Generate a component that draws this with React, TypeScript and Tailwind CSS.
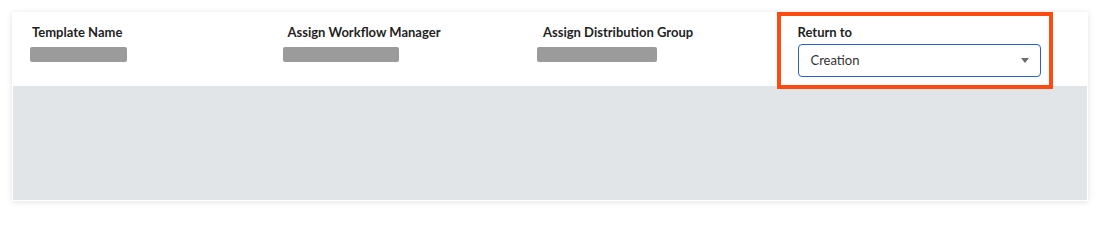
const columns = [
  { label: 'Template Name', bar: 'w-[97px] ml-0' },
  { label: 'Assign Workflow Manager', bar: 'w-[116px] ml-[-3px]' },
  { label: 'Assign Distribution Group', bar: 'w-[120px] ml-[-4px]' },
];

export default function App() {
  return (
    <div className="w-[1100px] h-[214px] overflow-hidden bg-white font-['Lato',_'Liberation_Sans',_sans-serif] pt-3 pl-3">
      <div className="w-[1076px] h-[189px] bg-white flex flex-col shadow-[0_1px_6px_rgba(0,0,0,0.12)]">
        {/* Header row */}
        <div className="h-[74px] flex pl-[18px]">
          {columns.map((col) => (
            <div key={col.label} className="w-[255.5px] pt-[12px]">
              <p className="text-[13px] font-bold leading-[16px] text-[#1f1f1f] pl-[2px]">{col.label}</p>
              <div className={`${col.bar} h-[15px] mt-[7px] rounded-[2px] bg-[#9b9b9b]`} />
            </div>
          ))}

          {/* Highlighted "Return to" field */}
          <div className="relative z-10 ml-[-20px] w-[276px] h-[77px] border-4 border-[#ff4a12] bg-white pl-[17px] pt-[8px]">
            <p className="text-[13px] font-bold leading-[16px] text-[#1f1f1f]">Return to</p>
            <div className="mt-[4px] w-[243px] h-[33px] rounded-[4px] border-[1.5px] border-[#2b5fcf] flex items-center justify-between pl-[12px] pr-[11px]">
              <span className="text-[13px] text-[#333] pt-[1px]">Creation</span>
              <svg width="8" height="5" viewBox="0 0 8 5">
                <path d="M0 0h8L4 5z" fill="#6b6b6b" />
              </svg>
            </div>
          </div>
        </div>

        {/* Empty body */}
        <div className="flex-1 mx-px mb-px bg-[#e2e5e8]" />
      </div>
    </div>
  );
}
